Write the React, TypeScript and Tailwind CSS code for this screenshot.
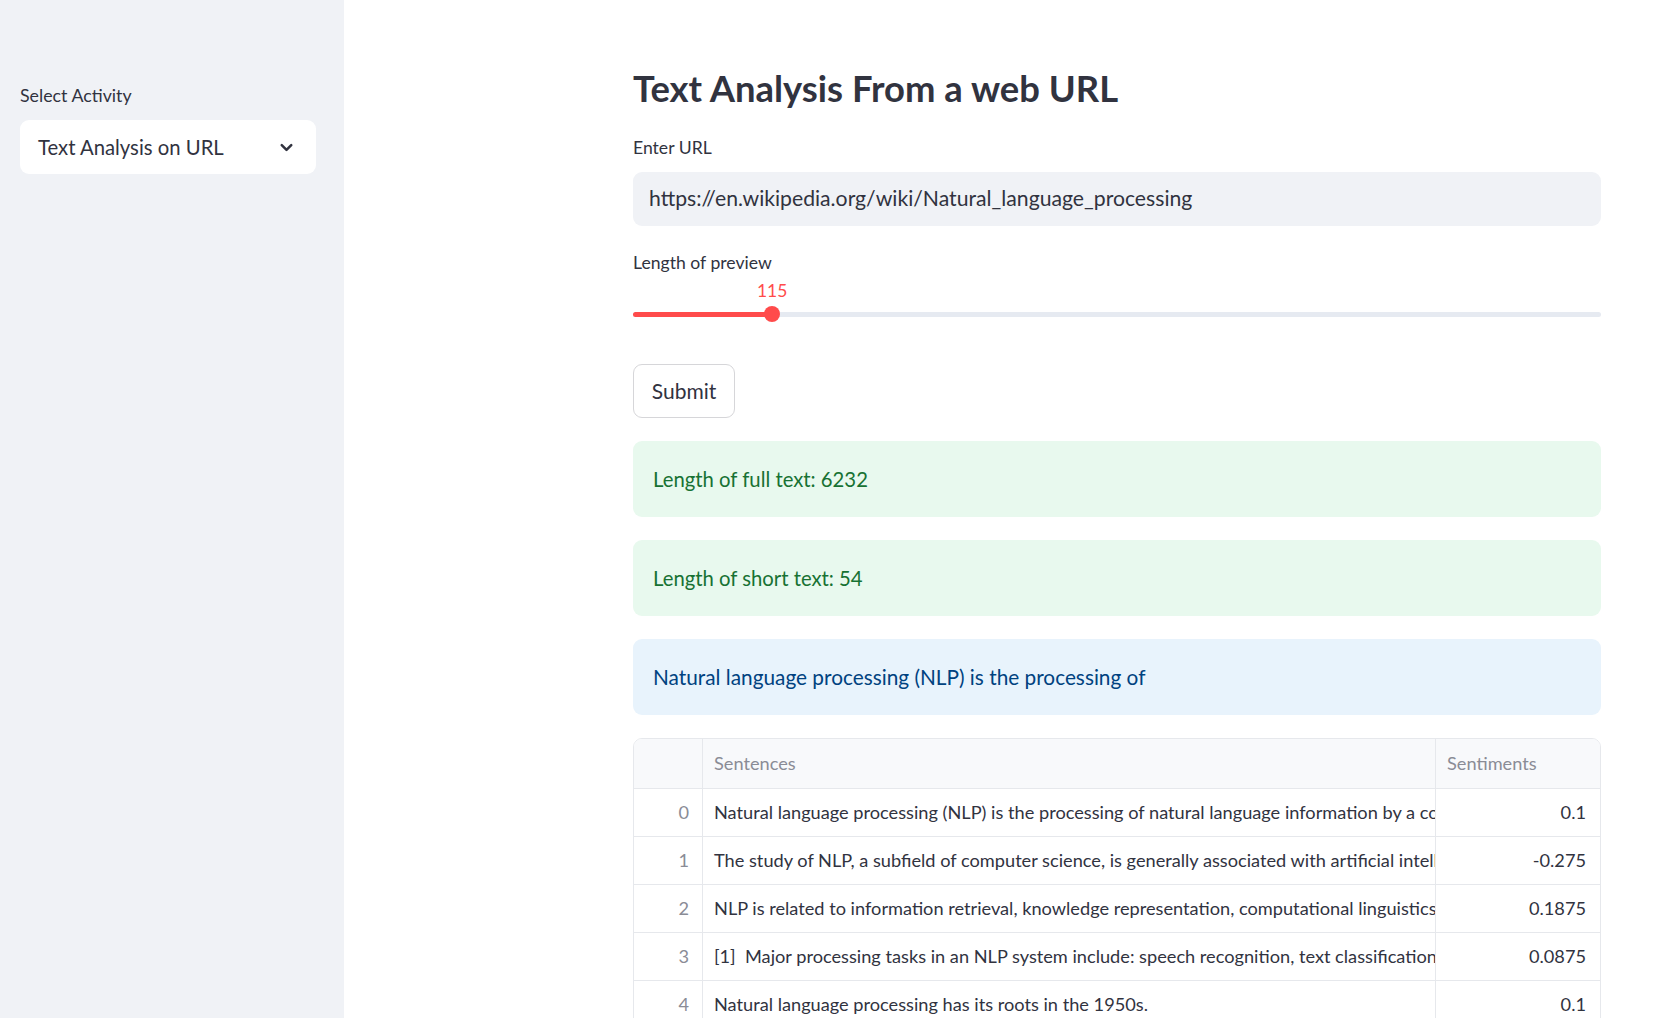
import { ChevronDown } from 'lucide-react';

const rows = [
  {
    sentence:
      'Natural language processing (NLP) is the processing of natural language information by a computer.',
    sentiment: '0.1',
  },
  {
    sentence:
      'The study of NLP, a subfield of computer science, is generally associated with artificial intelligence.',
    sentiment: '-0.275',
  },
  {
    sentence:
      'NLP is related to information retrieval, knowledge representation, computational linguistics, and more broadly with linguistics.',
    sentiment: '0.1875',
  },
  {
    sentence:
      '[1]  Major processing tasks in an NLP system include: speech recognition, text classification, natural language understanding, and natural language generation.',
    sentiment: '0.0875',
  },
  {
    sentence: 'Natural language processing has its roots in the 1950s.',
    sentiment: '0.1',
  },
  {
    sentence: 'Already in 1950, Alan Turing published an article titled "Computing Machinery and Intelligence".',
    sentiment: '0.0',
  },
];

const previewLength = 115;
const previewMax = 800;

const App = () => {
  return (
    <div className="flex h-screen overflow-hidden bg-white font-['Lato',sans-serif] text-[#31333f]">
      {/* Sidebar */}
      <aside className="w-[344px] shrink-0 bg-[#f0f2f6] px-[20px] pt-[83px]">
        <label className="block text-[17.8px] leading-[24px]">Select Activity</label>
        <div className="mt-[13px] flex h-[54px] w-[296px] items-center justify-between rounded-[9px] bg-white pl-[18px] pr-[20px]">
          <span className="text-[20.3px]">Text Analysis on URL</span>
          <ChevronDown size={19} strokeWidth={3.2} className="text-[#31333f]" />
        </div>
      </aside>

      {/* Main */}
      <main className="flex-1 pl-[289px] pr-[76px]">
        <div className="flex flex-col">
          <h1 className="mt-[64px] text-[36.4px] font-bold leading-[48px]">
            Text Analysis From a web URL
          </h1>

          <label className="mt-[24px] text-[17.6px] leading-[24px]">Enter URL</label>
          <div className="mt-[12px] flex h-[54px] items-center rounded-[9px] bg-[#f0f2f6] px-[16px] text-[21.2px]">
            https://en.wikipedia.org/wiki/Natural_language_processing
          </div>

          <label className="mt-[25px] text-[17.6px] leading-[24px]">Length of preview</label>
          <div className="relative mt-[4px] h-[24px]">
            <span
              className="absolute top-0 -translate-x-1/2 text-[17.4px] leading-[24px] text-[#ff4b4b]"
              style={{ left: `${(previewLength / previewMax) * 100}%` }}
            >
              {previewLength}
            </span>
          </div>
          <div className="relative mt-[3px] flex h-[16px] items-center">
            <div className="h-[5px] w-full rounded-full bg-[#e6eaf1]" />
            <div
              className="absolute left-0 h-[5px] rounded-full bg-[#ff4b4b]"
              style={{ width: `${(previewLength / previewMax) * 100}%` }}
            />
            <div
              className="absolute h-[16px] w-[16px] -translate-x-1/2 rounded-full bg-[#ff4b4b]"
              style={{ left: `${(previewLength / previewMax) * 100}%` }}
            />
          </div>

          <button className="mt-[42px] h-[54px] w-[102px] rounded-[9px] border border-[#d6d6d9] bg-white text-[21px] text-[#31333f]">
            Submit
          </button>

          <div className="mt-[23px] flex h-[76px] items-center rounded-[9px] bg-[#e8f9ee] px-[20px] text-[20.3px] text-[#177233]">
            Length of full text: 6232
          </div>
          <div className="mt-[23px] flex h-[76px] items-center rounded-[9px] bg-[#e8f9ee] px-[20px] text-[20.3px] text-[#177233]">
            Length of short text: 54
          </div>
          <div className="mt-[23px] flex h-[76px] items-center rounded-[9px] bg-[#e8f3fc] px-[20px] text-[20.8px] text-[#004280]">
            Natural language processing (NLP) is the processing of
          </div>

          {/* Dataframe */}
          <div className="mt-[23px] overflow-hidden rounded-t-[9px] border border-[#e6e8ec] text-[18.2px]">
            <div className="grid h-[49px] grid-cols-[69px_733px_1fr] bg-[#f8f9fb] text-[#8a8c96]">
              <div className="border-r border-[#e6e8ec]" />
              <div className="flex items-center border-r border-[#e6e8ec] px-[11px]">Sentences</div>
              <div className="flex items-center px-[11px]">Sentiments</div>
            </div>
            {rows.map((row, i) => (
              <div
                key={i}
                className="grid h-[48px] grid-cols-[69px_733px_1fr] border-t border-[#e6e8ec]"
              >
                <div className="flex items-center justify-end border-r border-[#e6e8ec] pr-[13px] text-[#8a8c96]">
                  {i}
                </div>
                <div className="flex items-center overflow-hidden whitespace-pre border-r border-[#e6e8ec] pl-[11px]">
                  {row.sentence}
                </div>
                <div className="flex items-center justify-end pr-[14px]">{row.sentiment}</div>
              </div>
            ))}
          </div>
        </div>
      </main>
    </div>
  );
};

export default App;
